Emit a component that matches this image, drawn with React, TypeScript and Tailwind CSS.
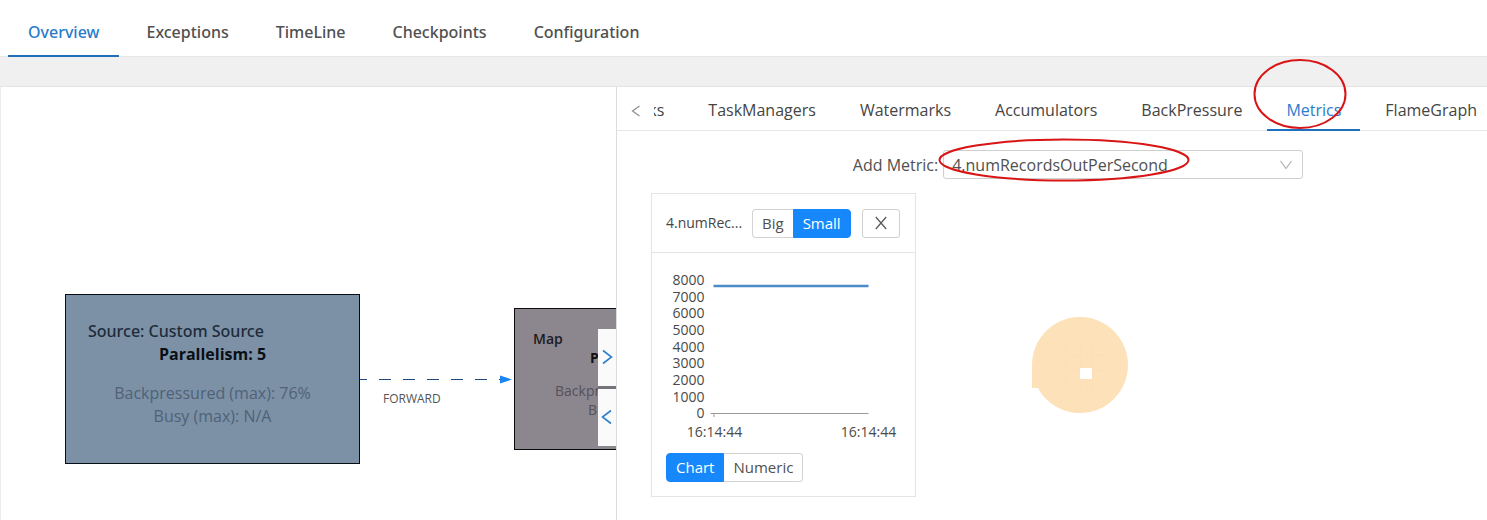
import { useState } from "react";

const mainTabs = ["Overview", "Exceptions", "TimeLine", "Checkpoints", "Configuration"];
const detailTabs = ["SubTasks", "TaskManagers", "Watermarks", "Accumulators", "BackPressure", "Metrics", "FlameGraph"];
const yTicks = [8000, 7000, 6000, 5000, 4000, 3000, 2000, 1000, 0];

function Segmented({ name, options, initial }: { name: string; options: string[]; initial: string }) {
  const [value, setValue] = useState(initial);
  return (
    <div role="radiogroup" aria-label={name} className="flex h-[29px] shrink-0">
      {options.map((o) => (
        <label
          key={o}
          className={
            "relative flex cursor-pointer items-center border px-[9px] text-[15px] first:rounded-l last:rounded-r " +
            (o === value ? "border-[#1788fb] bg-[#1788fb] text-white" : "border-[#d3d3d3] bg-white text-[#505050] first:border-r-0 last:border-l-0")
          }
        >
          <input
            type="radio"
            name={name}
            className="sr-only"
            checked={o === value}
            onChange={() => setValue(o)}
          />
          {o}
        </label>
      ))}
    </div>
  );
}

function MetricChart() {
  return (
    <svg viewBox="0 0 234 180" className="block h-[180px] w-full" role="img" aria-label="4.numRecordsOutPerSecond">
      <g fill="#4a4a4a" fontSize="14">
        {yTicks.map((t, i) => (
          <text key={t} x="38" y={23 + Math.round(i * 16.65)} textAnchor="end">
            {t}
          </text>
        ))}
        <text x="48" y="175" textAnchor="middle">16:14:44</text>
        <text x="202" y="175" textAnchor="middle">16:14:44</text>
      </g>
      <path d="M44 151.5H202M47.5 151v4" stroke="#9a9a9a" fill="none" />
      <path d="M47 24H202" stroke="#4b8bc8" strokeWidth="2.5" />
    </svg>
  );
}

function JobGraph() {
  return (
    <section aria-label="Job graph" className="relative overflow-hidden border-l border-[#ececec] bg-white">
      <div className="absolute top-[207px] left-16 flex h-[170px] w-[295px] flex-col border border-[#060d15] bg-[#7c91a6] pt-[25px] text-center text-base leading-[23px]">
        <p className="pl-[22px] text-left font-['Noto_Sans','Open_Sans',sans-serif] font-medium text-[#1d2b3a]">Source: Custom Source</p>
        <p className="font-bold text-[#0a0f16]">Parallelism: 5</p>
        <p className="mt-4 text-[#4f6277]">Backpressured (max): 76%</p>
        <p className="text-[#4f6277]">Busy (max): N/A</p>
      </div>
      <svg className="absolute top-[285px] left-[359px] h-4 w-[154px]" viewBox="0 0 154 16" aria-hidden="true">
        <path d="M0 7.5H142" stroke="#1f4a80" strokeWidth="1.2" strokeDasharray="12 12" strokeDashoffset="5" />
        <path d="M140 3.5L152 7.5L140 11.5Z" fill="#1c86ee" />
      </svg>
      <span className="absolute top-[304px] left-[382px] text-xs leading-4 text-[#555]">FORWARD</span>
      <div className="absolute top-[221px] left-[513px] h-[142px] w-[246px] border border-[#0c0b0d] bg-[#8c878f] pt-5 text-center text-sm leading-[19px]">
        <p className="pl-[18px] text-left font-semibold text-[#1c1a1f]">Map</p>
        <p className="font-bold text-[#111]">Parallelism: 5</p>
        <p className="mt-3.5 text-[#55515a]">Backpressured (max): 0%</p>
        <p className="text-[#55515a]">Busy (max): 0%</p>
      </div>
      <div className="absolute top-[242px] right-0 flex w-[18px] flex-col gap-[3px] bg-[#767279]">
        <button aria-label="Expand right" className="flex h-[57px] items-center justify-center bg-[#fafafa] pb-0.5">
          <svg viewBox="0 0 12 16" className="h-4 w-3" fill="none" stroke="#2f80cf" strokeWidth="1.6">
            <path d="M2 1.5L10.500 8L2 14.500" />
          </svg>
        </button>
        <button aria-label="Expand left" className="flex h-[57px] items-center justify-center bg-[#fafafa] pb-0.5">
          <svg viewBox="0 0 12 16" className="h-4 w-3" fill="none" stroke="#2f80cf" strokeWidth="1.6">
            <path d="M10 1.500L1.500 8L10 14.500" />
          </svg>
        </button>
      </div>
    </section>
  );
}

export default function App() {
  const [tab, setTab] = useState("Overview");
  const [detail, setDetail] = useState("Metrics");
  return (
    <div className="flex min-h-screen flex-col bg-[#f0f0f0] font-['Open_Sans','Noto_Sans',sans-serif] text-[#454545]">
      <nav className="flex h-[57px] gap-[7px] border-b border-[#e6e6e6] bg-white pl-2 font-['Noto_Sans','Open_Sans',sans-serif]">
        {mainTabs.map((t) => (
          <button
            key={t}
            onClick={() => setTab(t)}
            className={
              "-mb-px border-b-2 px-5 pt-2 text-base font-medium " +
              (t === tab ? "border-[#1f6fb8] text-[#2b7bcb]" : "border-transparent text-[#505050]")
            }
          >
            {t}
          </button>
        ))}
      </nav>

      <main className="mt-[29px] grid grow grid-cols-[616fr_871fr] border-t border-[#e4e4e4]">
        <JobGraph />
        <section aria-label="Vertex details" className="relative min-w-0 border-l border-[#dcdcdc] bg-white">
          <div className="flex h-11 border-b border-[#e6e6e6]">
            <button aria-label="Previous tabs" className="flex w-[37px] shrink-0 items-center justify-center pt-1">
              <svg viewBox="0 0 10 12" className="h-3 w-2.5" fill="none" stroke="#8c8c8c" strokeWidth="1.2">
                <path d="M8.500 1L1.500 6L8.500 11" />
              </svg>
            </button>
            <div className="-mb-px flex min-w-0 grow justify-end overflow-hidden">
              <div className="-mr-[9px] flex shrink-0 gap-1.5">
                {detailTabs.map((t) => (
                  <button
                    key={t}
                    onClick={() => setDetail(t)}
                    className={
                      "border-b-2 px-[19px] pt-1 text-base " +
                      (t === detail ? "border-[#1f6fc0] font-medium text-[#2b7bcb]" : "border-transparent")
                    }
                  >
                    {t}
                  </button>
                ))}
              </div>
            </div>
          </div>
          <svg className="pointer-events-none absolute -top-[29px] right-[140px] h-[72px] w-[94px]" viewBox="0 0 94 72" aria-hidden="true">
            <ellipse cx="47" cy="36" rx="45.500" ry="34" fill="none" stroke="#d81414" strokeWidth="2" />
          </svg>

          <div className="mt-[19px] flex items-center justify-center gap-[5px] pl-[52px]">
            <label htmlFor="metric" className="text-base text-[#505050]">Add Metric:</label>
            <div className="relative w-[360px]">
              <select
                id="metric"
                className="block h-[29px] w-full appearance-none rounded-[3px] border border-[#cfcfcf] bg-white pl-2 text-base text-[#505050]"
              >
                <option>4.numRecordsOutPerSecond</option>
              </select>
              <svg className="pointer-events-none absolute top-2.5 right-[11px] h-2.5 w-3" viewBox="0 0 12 10" fill="none" stroke="#b0b0b0" strokeWidth="1.2">
                <path d="M.5 1L6 8.500L11.500 1" />
              </svg>
              <svg className="pointer-events-none absolute -top-3 -left-[5px] h-11 w-[252px]" viewBox="0 0 252 44" aria-hidden="true">
                <ellipse cx="126" cy="22" rx="124.500" ry="20.500" fill="none" stroke="#d81414" strokeWidth="2" />
              </svg>
            </div>
          </div>

          <div className="mt-3.5 flex">
            <article className="ml-[34px] w-[265px] border border-[#e4e4e4]">
              <header className="flex h-[59px] items-center border-b border-[#e4e4e4] pl-3.5">
                <h2 title="4.numRecordsOutPerSecond" className="w-[86px] shrink-0 text-sm whitespace-nowrap">4.numRec...</h2>
                <Segmented name="Size" options={["Big", "Small"]} initial="Small" />
                <button aria-label="Remove metric" className="ml-[11px] flex h-[29px] w-[38px] items-center justify-center rounded-[3px] border border-[#d0d0d0]">
                  <svg viewBox="0 0 12 14" className="h-3.5 w-3" fill="none" stroke="#555" strokeWidth="1.2">
                    <path d="M.8 1L11.200 13M11.200 1L.8 13" />
                  </svg>
                </button>
              </header>
              <div className="px-3.5 pt-[9px] pb-3.5">
                <MetricChart />
                <div className="mt-[11px] flex">
                  <Segmented name="View" options={["Chart", "Numeric"]} initial="Chart" />
                </div>
              </div>
            </article>
            <div className="mt-[122px] ml-[115px]">
              <svg viewBox="0 0 98 98" className="h-[98px] w-[98px]" aria-hidden="true">
                <path d="M1 73V49A48 48 0 1 1 8 75L7 73Z" fill="#fde1b8" />
                <path d="M27 40h48M27 55h48M35 28v48M49 28v48M61 28v48" stroke="#fadfb6" strokeWidth="1" />
                <rect x="49" y="53" width="12" height="11" fill="#fff" />
              </svg>
            </div>
          </div>
        </section>
      </main>
    </div>
  );
}
